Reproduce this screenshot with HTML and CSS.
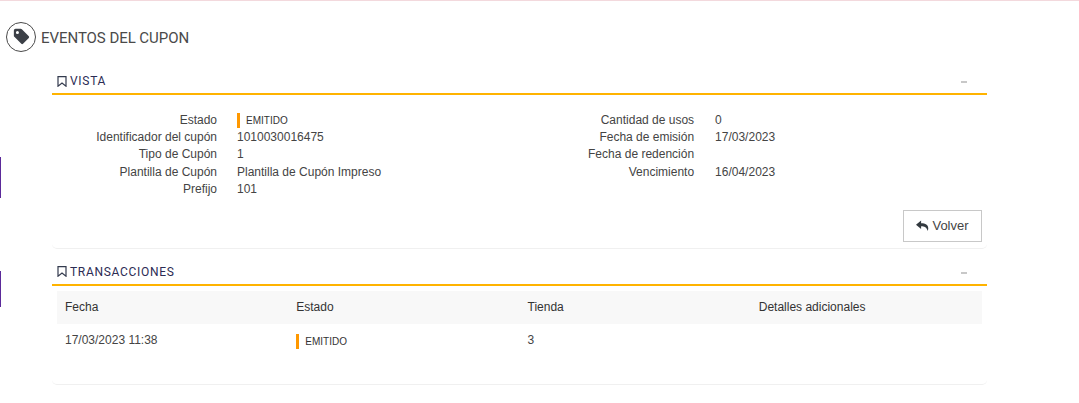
FILE: index.html
```html
<!doctype html>
<html lang="en">
<head>
    <meta charset="utf-8">
    <title>Eventos del cupon</title>
    <link rel="stylesheet" href="styles.css">
</head>
<body>
<span class="side-mark side-mark-one"></span>
<span class="side-mark side-mark-two"></span>

<div class="page-title">
    <span class="title-icon">
        <svg width="17" height="17" viewBox="0 0 20 20"><path d="M1 3 Q1 1 3 1 L9 1 Q9.8 1 10.4 1.6 L18.6 9.8 Q19.4 10.8 18.6 11.8 L11.8 18.6 Q10.8 19.4 9.8 18.6 L1.6 10.4 Q1 9.8 1 9 Z M5.2 3.4 A1.8 1.8 0 1 0 5.2 7 A1.8 1.8 0 1 0 5.2 3.4 Z" fill="#3c4047" fill-rule="evenodd"/></svg>
    </span>
    <h1>EVENTOS DEL CUPON</h1>
</div>

<section class="panel panel-vista">
    <div class="panel-head">
        <svg class="bookmark" width="10" height="11" viewBox="0 0 10 11"><path d="M1 .6 H9 V10.2 L5 7 L1 10.2 Z" fill="none" stroke="#333a4d" stroke-width="1.2"/></svg>
        <h2>VISTA</h2>
        <span class="collapse"></span>
    </div>
    <div class="details">
        <dl class="detail-col detail-left">
            <dt>Estado</dt><dd><span class="status">EMITIDO</span></dd>
            <dt>Identificador del cupón</dt><dd>1010030016475</dd>
            <dt>Tipo de Cupón</dt><dd>1</dd>
            <dt>Plantilla de Cupón</dt><dd>Plantilla de Cupón Impreso</dd>
            <dt>Prefijo</dt><dd>101</dd>
        </dl>
        <dl class="detail-col detail-right">
            <dt>Cantidad de usos</dt><dd>0</dd>
            <dt>Fecha de emisión</dt><dd>17/03/2023</dd>
            <dt>Fecha de redención</dt><dd></dd>
            <dt>Vencimiento</dt><dd>16/04/2023</dd>
        </dl>
    </div>
    <div class="actions">
        <button type="button" class="back-button">
            <svg width="13" height="12" viewBox="0 0 14 12"><path d="M5.5 0 L0 4.6 L5.5 9.2 V6.3 C9 6.3 11.6 7.2 12.6 11.5 C14.6 6 11.5 3 5.5 3 Z" fill="#333a40"/></svg>
            Volver
        </button>
    </div>
</section>

<section class="panel panel-trans">
    <div class="panel-head">
        <svg class="bookmark" width="10" height="11" viewBox="0 0 10 11"><path d="M1 .6 H9 V10.2 L5 7 L1 10.2 Z" fill="none" stroke="#333a4d" stroke-width="1.2"/></svg>
        <h2>TRANSACCIONES</h2>
        <span class="collapse"></span>
    </div>
    <div class="table-wrap">
        <table>
            <thead>
                <tr><th>Fecha</th><th>Estado</th><th>Tienda</th><th>Detalles adicionales</th></tr>
            </thead>
            <tbody>
                <tr><td>17/03/2023 11:38</td><td><span class="status">EMITIDO</span></td><td>3</td><td></td></tr>
            </tbody>
        </table>
    </div>
</section>
</body>
</html>
```

FILE: styles.css
```css
* {
    box-sizing: border-box;
}

body {
    margin: 0;
    border-top: 1px solid #f3d9dd;
    background: #fff;
    color: #444;
    font-family: "Liberation Sans", Arial, sans-serif;
    font-size: 12px;
    overflow: hidden;
}

.side-mark {
    position: absolute;
    left: 0;
    width: 1px;
    background: #5b2a9a;
}

.side-mark-one {
    top: 157px;
    height: 41px;
}

.side-mark-two {
    top: 271px;
    height: 36px;
}

.page-title {
    display: flex;
    align-items: flex-start;
    gap: 5px;
    padding: 21px 0 0 6px;
    height: 68px;
}

.page-title h1 {
    margin: 0;
    font-family: Roboto, sans-serif;
    font-size: 15px;
    font-weight: 400;
    letter-spacing: -.05px;
    line-height: 32px;
    color: #4a4a4a;
}

.title-icon {
    display: flex;
    align-items: center;
    justify-content: center;
    width: 30px;
    height: 30px;
    padding-bottom: 2px;
    border: 1px solid #4a4a4a;
    border-radius: 50%;
}

.panel {
    width: 935px;
    margin-left: 52px;
    border-bottom: 1px solid #f0f0f0;
    border-radius: 0 0 5px 5px;
}

.panel-head {
    display: flex;
    align-items: center;
    gap: 3px;
    height: 26px;
    padding: 0 20px 0 5px;
    border-bottom: 2px solid #ffb300;
}

.panel-head h2 {
    margin: 0;
    font-family: Roboto, sans-serif;
    font-size: 12px;
    font-weight: 400;
    letter-spacing: .7px;
    color: #2c2c54;
}

.collapse {
    width: 6px;
    height: 2px;
    margin: 2px 0 0 auto;
    background: #c8c8c8;
}

.details {
    display: flex;
    padding-top: 17px;
}

.detail-col {
    display: grid;
    grid-template-columns: 165px auto;
    grid-auto-rows: 17.2px;
    column-gap: 20px;
    margin: 0;
    line-height: 17.2px;
}

.detail-right {
    margin-left: 128px;
    grid-template-columns: 185px auto;
    column-gap: 21px;
}

.detail-col dt {
    text-align: right;
}

.detail-col dd {
    margin: 0;
}

.status {
    display: inline-block;
    height: 15px;
    border-left: 3px solid #ff9800;
    padding-left: 6px;
    font-size: 10px;
    line-height: 15px;
    color: #333;
    vertical-align: top;
}

.details .status {
    margin-top: 1px;
}

.actions {
    display: flex;
    justify-content: flex-end;
    padding: 12px 5px 6px 0;
}

.back-button {
    display: flex;
    align-items: center;
    justify-content: center;
    gap: 3px;
    width: 79px;
    height: 32px;
    background: #fff;
    border: 1px solid #c8c8c8;
    font-family: "Liberation Sans", Arial, sans-serif;
    font-size: 13px;
    color: #444;
}

.panel-trans {
    margin-top: 11px;
}

.table-wrap {
    padding: 5px 5px 27px 5px;
}

table {
    width: 925px;
    table-layout: fixed;
    border-collapse: collapse;
}

th {
    height: 33px;
    background: #f8f8f8;
    text-align: left;
    font-weight: 400;
    color: #333;
    padding: 0 8px;
}

td {
    padding: 8px;
    line-height: 17.5px;
    vertical-align: top;
}

td .status {
    margin-top: 2px;
}
```
